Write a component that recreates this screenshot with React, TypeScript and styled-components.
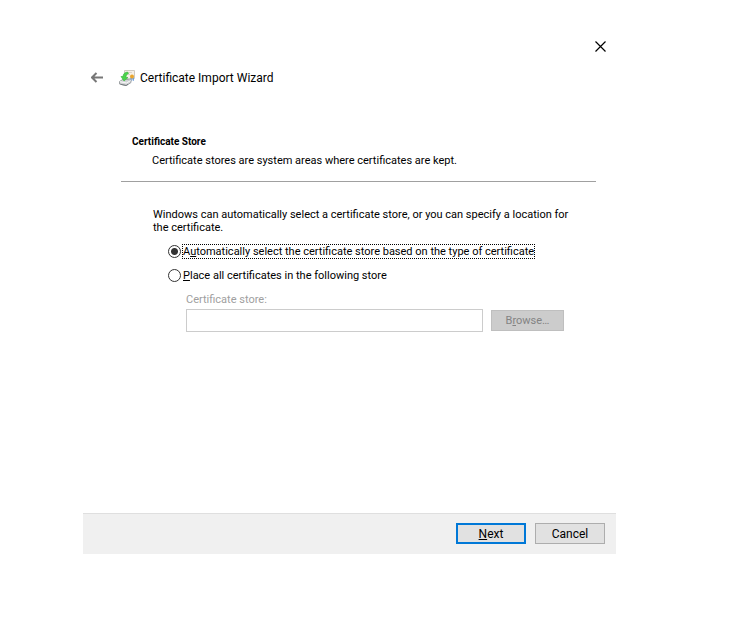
import React, { useState } from "react";
import styled, { createGlobalStyle, css } from "styled-components";

const dialogFont = 'Roboto, "Noto Sans", sans-serif';

const GlobalStyle = createGlobalStyle`
  *, *::before, *::after { box-sizing: border-box; }
  body {
    margin: 0;
    background: #fff;
    color: #000;
    font: 11px/13px ${dialogFont};
  }
`;

const Desktop = styled.div`
  display: flex;
  min-height: 100vh;
  padding: 30px 133px 87px 83px;
`;

const Dialog = styled.main`
  flex: 1;
  display: flex;
  flex-direction: column;
  min-width: 0;
`;

const TitleBar = styled.div`
  display: flex;
  justify-content: flex-end;
  height: 34px;
  padding-right: 4px;
`;

const IconButton = styled.button`
  display: flex;
  align-items: center;
  justify-content: center;
  width: 22px;
  height: 34px;
  padding: 0;
  border: 0;
  background: none;
`;

const Header = styled.header`
  display: flex;
  align-items: center;
  height: 27px;
  padding-left: 3px;
`;

const AppIcon = styled.svg`
  flex: none;
  margin-left: 11px;
`;

const Title = styled.h1`
  margin: 0 0 0 5px;
  font: 400 12px/16px ${dialogFont};
`;

const PageHead = styled.section`
  margin: 44px 20px 0 38px;
  padding: 0 11px 14px;
  border-bottom: 1px solid #a0a0a0;
`;

const PageTitle = styled.h2`
  margin: 0;
  font: 700 10px/13px ${dialogFont};
`;

const PageNote = styled.p`
  margin: 6px 0 0 20px;
`;

const PageBody = styled.section`
  flex: 1;
  padding: 26px 50px 0 70px;
`;

const Intro = styled.p`
  margin: 0 -20px 0 0;
  padding-right: 10px;
`;

const Options = styled.div`
  display: flex;
  flex-direction: column;
  gap: 9px;
  padding: 10px 0 0 15px;
`;

const Option = styled.label`
  display: flex;
  align-items: center;
  gap: 1px;
`;

const Radio = styled.input`
  appearance: none;
  flex: none;
  width: 13px;
  height: 13px;
  margin: 0;
  border: 1px solid #333;
  border-radius: 50%;
  background: #fff;
  &:checked {
    background: radial-gradient(circle, #333 3px, #fff 4px);
  }
`;

const OptionText = styled.span<{ $focused: boolean }>`
  border: 1px dotted transparent;
  white-space: nowrap;
  ${(p) => p.$focused && css`border-color: #000;`}
`;

const StoreField = styled.div`
  display: grid;
  grid-template-columns: 1fr 73px;
  gap: 3px 8px;
  align-items: center;
  padding: 10px 2px 0 33px;
`;

const StoreLabel = styled.label`
  grid-column: 1 / -1;
  color: #a0a0a0;
`;

const StoreInput = styled.input`
  width: 100%;
  min-width: 0;
  height: 23px;
  padding: 2px 4px;
  border: 1px solid #ccc;
  background: #fff;
  font: inherit;
`;

const PushButton = styled.button<{ $primary?: boolean }>`
  width: 70px;
  height: 21px;
  padding: 0;
  border: ${(p) => (p.$primary ? "2px solid #0078d7" : "1px solid #adadad")};
  background: #e1e1e1;
  color: #000;
  font: 12px/16px ${dialogFont};
`;

const BrowseButton = styled(PushButton)`
  width: 73px;
  border-color: #bfbfbf;
  background: #ccc;
  color: #838383;
  font: 11px/13px ${dialogFont};
`;

const Key = styled.u`
  text-underline-offset: 1px;
  text-decoration-thickness: 1px;
  text-decoration-skip-ink: none;
`;

const Footer = styled.footer`
  display: flex;
  justify-content: flex-end;
  gap: 9px;
  padding: 9px 11px;
  height: 41px;
  border-top: 1px solid #dfdfdf;
  background: #f0f0f0;
`;

function ImportIcon() {
  return (
    <AppIcon width="16" height="16" viewBox="0 0 16 16" aria-hidden="true">
      <path d="M5.5.5h10v8h-10z" fill="#f6f0e6" stroke="#cfcac2" />
      <path d="M8 2.500h5M9 4.500h2" stroke="#ddd5cc" />
      <path d="M11.500 7.500h1.200v3.500l-1.200-.8zM13.500 7.500h1.300v3.500l-1.300-.8z" fill="#5b8fd0" />
      <circle cx="13" cy="6.500" r="2" fill="#e9a52c" />
      <path d="M.5 11.500l4-2.500 7.500 1v2.500L7.500 15.500l-7-1.500z" fill="#d2d4d6" stroke="#9ea2a4" />
      <path d="M1 11.700l6.500 1.300 4.200-2.500" fill="none" stroke="#fafafa" />
      <path d="M1.500 14.300l5.500 1.200 2-1.300" fill="none" stroke="#777d80" />
      <path d="M8.500 2C5.500 2.500 4 4 4 6.500H2L5 11l4-3.500H7c0-1.800.5-3 2.500-4z" fill="#4bd34b" stroke="#36b33b" strokeWidth=".6" />
    </AppIcon>
  );
}

export default function App() {
  const [choice, setChoice] = useState("auto");
  return (
    <>
      <GlobalStyle />
      <Desktop>
        <Dialog>
          <TitleBar>
            <IconButton type="button" aria-label="Close">
              <svg width="12" height="12" viewBox="0 0 12 12" aria-hidden="true">
                <path d="M.5.5l10 10M10.500.5l-10 10" stroke="#000" strokeWidth="1.200" />
              </svg>
            </IconButton>
          </TitleBar>
          <Header>
            <IconButton type="button" aria-label="Back">
              <svg width="12" height="12" viewBox="0 0 12 12" aria-hidden="true">
                <path d="M12 5.500H1M5.500 1L1 5.500 5.500 10" fill="none" stroke="#777" strokeWidth="2" />
              </svg>
            </IconButton>
            <ImportIcon />
            <Title>Certificate Import Wizard</Title>
          </Header>
          <PageHead>
            <PageTitle>Certificate Store</PageTitle>
            <PageNote>Certificate stores are system areas where certificates are kept.</PageNote>
          </PageHead>
          <PageBody>
            <Intro>
              Windows can automatically select a certificate store, or you can specify a location for the certificate.
            </Intro>
            <Options>
              <Option>
                <Radio type="radio" name="store" checked={choice === "auto"} onChange={() => setChoice("auto")} />
                <OptionText $focused={choice === "auto"}>
                  A<Key>u</Key>tomatically select the certificate store based on the type of certificate
                </OptionText>
              </Option>
              <Option>
                <Radio type="radio" name="store" checked={choice === "place"} onChange={() => setChoice("place")} />
                <OptionText $focused={choice === "place"}>
                  <Key>P</Key>lace all certificates in the following store
                </OptionText>
              </Option>
            </Options>
            <StoreField>
              <StoreLabel htmlFor="store-name">Certificate store:</StoreLabel>
              <StoreInput id="store-name" type="text" disabled={choice === "auto"} />
              <BrowseButton type="button" disabled={choice === "auto"}>
                B<Key>r</Key>owse…
              </BrowseButton>
            </StoreField>
          </PageBody>
          <Footer>
            <PushButton type="button" $primary>
              <Key>N</Key>ext
            </PushButton>
            <PushButton type="button">Cancel</PushButton>
          </Footer>
        </Dialog>
      </Desktop>
    </>
  );
}
